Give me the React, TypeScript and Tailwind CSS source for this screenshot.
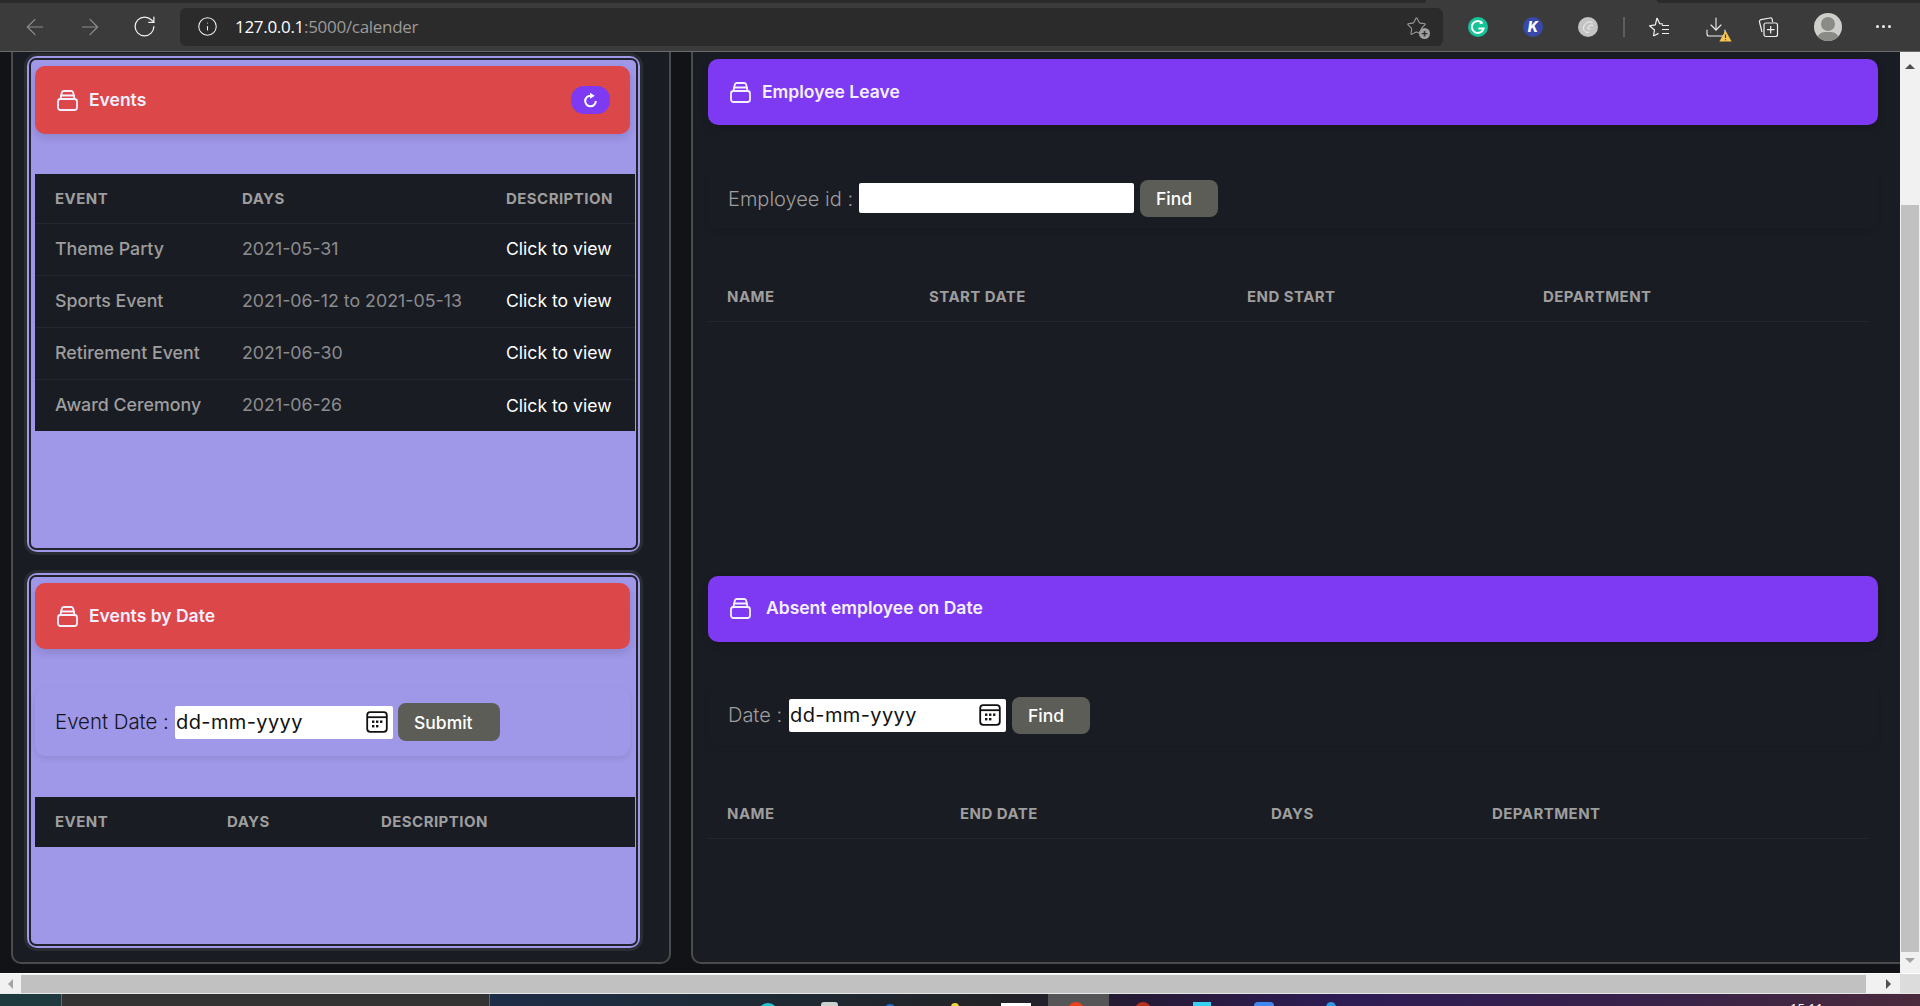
import React from "react";
import { ArrowLeft, ArrowRight, RotateCw, Info, Star, Download } from "lucide-react";

const font = "font-['Inter',sans-serif]";

function StackIcon({ className }: { className?: string }) {
  return (
    <svg viewBox="0 0 21 21" fill="none" stroke="currentColor" strokeWidth="1.8" strokeLinejoin="round" strokeLinecap="round" className={className}>
      <rect x="1" y="9" width="19" height="11" rx="2.5" />
      <path d="M3.5 9 4.8 2.8A2 2 0 0 1 6.7 1h7.6a2 2 0 0 1 1.9 1.8L17.5 9" />
      <path d="M4 5.5h13" />
    </svg>
  );
}

function CalendarIcon() {
  return (
    <svg viewBox="0 0 22 22" className="w-[22px] h-[22px] shrink-0" fill="none">
      <rect x="1.2" y="1.2" width="19.6" height="19.6" rx="3" stroke="#111" strokeWidth="1.8" />
      <path d="M1.5 6.2h19" stroke="#111" strokeWidth="1.8" />
      <g fill="#111">
        <rect x="6" y="9.5" width="2.4" height="2.4" />
        <rect x="10" y="9.5" width="2.4" height="2.4" />
        <rect x="14" y="9.5" width="2.4" height="2.4" />
        <rect x="6" y="14" width="2.4" height="2.4" />
        <rect x="10" y="14" width="2.4" height="2.4" />
      </g>
    </svg>
  );
}

function TitleBar({ title, color, gap, height, width, children }: { title: string; color: string; gap: string; height: string; width: string; children?: React.ReactNode }) {
  return (
    <div className={`${color} ${height} ${width} rounded-[10px] flex items-center pl-[22px] pr-[20px] shadow-[0_4px_8px_rgba(0,0,0,0.12)] text-[#f5f0ff]`}>
      <StackIcon className="w-[21px] h-[21px] shrink-0" />
      <span className={`${gap} text-[17.5px] font-semibold`}>{title}</span>
      {children}
    </div>
  );
}

function DateBox({ width }: { width: string }) {
  return (
    <div className={`${width} h-[33px] bg-white rounded-[2px] flex items-center justify-between pl-[1px] pr-[5px]`}>
      <span className="text-[20px] tracking-[0.4px] text-[#111] font-['Inter',sans-serif]">dd-mm-yyyy</span>
      <CalendarIcon />
    </div>
  );
}

function GreyButton({ label, width, height }: { label: string; width: string; height: string }) {
  return (
    <button className={`${width} ${height} bg-[#5c5d57] rounded-[8px] text-white text-[17.5px] font-medium text-left pl-[16px] pt-[2px]`}>
      {label}
    </button>
  );
}

const events = [
  ["Theme Party", "2021-05-31"],
  ["Sports Event", "2021-06-12 to 2021-05-13"],
  ["Retirement Event", "2021-06-30"],
  ["Award Ceremony", "2021-06-26"],
];

function Card({ h, children }: { h: string; children: React.ReactNode }) {
  return (
    <div className={`${h} w-[613px] rounded-[10px] bg-[#9f97e8] p-[2px] shadow-[0_0_0_3px_#2b2c32]`}>
      <div className="h-full rounded-[7px] border-2 border-[#23232e] pl-[4px]">{children}</div>
    </div>
  );
}

const th = "text-[15px] font-bold tracking-[0.45px] text-[#9e9e9e] uppercase text-left";

function App() {
  return (
    <div className={`${font} w-[1920px] h-[1006px] overflow-hidden flex flex-col bg-[#121317]`}>
      {/* browser toolbar */}
      <div className="h-[52px] shrink-0 bg-[#3b3b3b] border-b border-[#6a6a6a] relative flex flex-col">
        <div className="h-[3px] flex shrink-0">
          <div className="w-[1426px] bg-[#2a2a2a] rounded-br-[6px]" />
          <div className="flex-1" />
          <div className="w-[263px] bg-[#2a2a2a] rounded-bl-[6px]" />
        </div>
        <div className="flex-1 flex items-center pl-[22px] pb-[1px]">
          <ArrowLeft className="w-[26px] h-[26px] text-[#8d8d8d]" strokeWidth={1.1} />
          <ArrowRight className="w-[26px] h-[26px] text-[#8d8d8d] ml-[29px]" strokeWidth={1.1} />
          <RotateCw className="w-[25px] h-[25px] text-[#f0f0f0] ml-[29px]" strokeWidth={1.2} />
          <div className="ml-[23px] w-[1263px] h-[38px] bg-[#2b2b2b] rounded-[6px] flex items-center pl-[17px] pr-[15px]">
            <Info className="w-[21px] h-[21px] text-[#f0f0f0]" strokeWidth={1.2} />
            <span className="ml-[17px] text-[17px] font-['Open_Sans',sans-serif] tracking-[-0.3px] text-white">
              127.0.0.1<span className="text-[#9a9a9a]">:5000/calender</span>
            </span>
            <div className="ml-auto relative w-[22px] h-[22px]">
              <Star className="w-[21px] h-[21px] text-[#9b9b9b]" strokeWidth={1.2} />
              <div className="absolute right-[-2px] bottom-[-1px] w-[11px] h-[11px] rounded-full bg-[#a0a0a0] text-[#2b2b2b] text-[11px] leading-[10px] text-center font-bold">+</div>
            </div>
          </div>
          {/* extensions */}
          <div className="ml-[25px] w-[20px] h-[20px] shrink-0">
            <svg viewBox="0 0 20 20" className="w-[20px] h-[20px]">
              <circle cx="10" cy="10" r="10" fill="#15c39a" />
              <path d="M14.5 6.2A6 6 0 1 0 15.6 11.5H10.5" fill="none" stroke="#fff" strokeWidth="2" />
              <path d="M13.2 3.5l1.6 3.3-3.5.4z" fill="#fff" />
            </svg>
          </div>
          <div className="ml-[35px] w-[20px] h-[20px] rounded-full bg-[#3949ab] text-white text-[14px] font-extrabold italic leading-[20px] text-center shrink-0">K</div>
          <div className="ml-[35px] w-[20px] h-[20px] shrink-0">
            <svg viewBox="0 0 20 20" className="w-[20px] h-[20px]">
              <circle cx="10" cy="10" r="10" fill="#c4c4c4" />
              <path d="M14.5 5.5C10 3.5 5.5 7 5.5 11.5c0 3 3 4.5 5.5 3.5M15 8.5c-2-1-4.5 0-5 2.5-.2 1.3 1.5 1.7 2.3.6" fill="none" stroke="#f2f2f2" strokeWidth="1" />
            </svg>
          </div>
          <div className="ml-[25px] w-[2px] h-[20px] bg-[#5e5e5e]" />
          <div className="ml-[25px] w-[24px] h-[22px] flex items-center text-[#f0f0f0] -translate-x-[3px]">
            <svg viewBox="0 0 24 22" className="w-[24px] h-[22px]" fill="none" stroke="currentColor" strokeWidth="1.2" strokeLinejoin="round">
              <path d="M10 2l2.6 5.6 3.4.5M6.5 20l1-6-5-4.2 5.8-1L10 2M6.5 20l5-2.6" />
              <path d="M15 9.5h7M15 13.5h7M15 17.5h7" />
            </svg>
          </div>
          <div className="ml-[31px] relative w-[24px] h-[24px] -translate-x-[1px]">
            <Download className="w-[24px] h-[24px] text-[#f0f0f0]" strokeWidth={1.1} />
            <svg viewBox="0 0 12 11" className="absolute right-[-4px] bottom-[-3px] w-[13px] h-[12px]">
              <path d="M6 0.5 11.7 10.5H0.3Z" fill="#f5c451" />
              <path d="M6 4v3.4M6 8.4v1" stroke="#333" strokeWidth="1" />
            </svg>
          </div>
          <div className="ml-[30px] w-[22px] h-[22px] -translate-x-[2px]">
            <svg viewBox="0 0 22 22" className="w-[22px] h-[22px]" fill="none" stroke="#f0f0f0" strokeWidth="1.2" strokeLinejoin="round">
              <path d="M5 16 2.5 6a2 2 0 0 1 1.5-2.4L13 2a2 2 0 0 1 2.3 1.6L15.6 6" />
              <rect x="7" y="7" width="13.5" height="13.5" rx="2" />
              <path d="M13.7 10v7.5M10 13.7h7.5" />
            </svg>
          </div>
          <div className="ml-[33px] w-[28px] h-[28px] rounded-full bg-[#cfcfca] relative overflow-hidden">
            <div className="absolute left-[7px] top-[4px] w-[14px] h-[14px] rounded-full bg-[#8a8a87]" />
            <div className="absolute left-[3px] top-[19px] w-[22px] h-[16px] rounded-full bg-[#8a8a87]" />
          </div>
          <div className="ml-[34px] flex gap-[3px]">
            <div className="w-[3px] h-[3px] rounded-full bg-[#f0f0f0]" />
            <div className="w-[3px] h-[3px] rounded-full bg-[#f0f0f0]" />
            <div className="w-[3px] h-[3px] rounded-full bg-[#f0f0f0]" />
          </div>
        </div>
      </div>

      {/* page */}
      <div className="h-[921px] shrink-0 flex">
        <div className="w-[1900px] flex pl-[11px] pb-[9px] gap-[20px] overflow-hidden">
          {/* left panel */}
          <div className="w-[660px] h-full shrink-0 bg-[#1a1c23] border-x-2 border-b-2 border-[#4b4b4e] rounded-b-[10px] pl-[14px] pt-[4px] flex flex-col gap-[21px]">
            <Card h="h-[496px]">
              <div className="pt-[6px]">
                <TitleBar title="Events" color="bg-[#dc474a]" gap="ml-[11px]" height="h-[68px]" width="w-[595px]">
                  <div className="ml-auto w-[39px] h-[28px] rounded-[13px] bg-[#7e3af2] flex items-center justify-center">
                    <svg viewBox="0 0 16 16" className="w-[17px] h-[17px]" fill="none">
                      <path d="M8 3.5a5 5 0 1 0 5 5" stroke="#fff" strokeWidth="1.9" />
                      <path d="M7.6 0.6v5.8L12 3.5z" fill="#fff" />
                    </svg>
                  </div>
                </TitleBar>
                <table className="mt-[40px] w-[600px] table-fixed bg-[#1a1c23] border-collapse">
                  <thead>
                    <tr className="h-[49px] border-b border-[#24272f]">
                      <th className={`${th} w-[207px] pl-[20px] pt-[2px]`}>Event</th>
                      <th className={`${th} w-[264px] pt-[2px]`}>Days</th>
                      <th className={`${th} pt-[2px]`}>Description</th>
                    </tr>
                  </thead>
                  <tbody>
                    {events.map(([name, days], i) => (
                      <tr key={name} className={`${i < 3 ? "h-[52px] border-b border-[#24272f]" : "h-[52px]"}`}>
                        <td className="pl-[20px] pt-[1px] text-[17.8px] font-medium text-[#9e9e9e] whitespace-nowrap">{name}</td>
                        <td className="pt-[1px] text-[17.8px] text-[#8b8c8f] whitespace-nowrap">{days}</td>
                        <td className="pt-[1px] text-[17.6px] text-white whitespace-nowrap">Click to view</td>
                      </tr>
                    ))}
                  </tbody>
                </table>
              </div>
            </Card>
            <Card h="h-[375px]">
              <div className="pt-[6px]">
                <TitleBar title="Events by Date" color="bg-[#dc474a]" gap="ml-[11px]" height="h-[66px]" width="w-[595px]" />
                <div className="mt-[39px] w-[595px] h-[68px] rounded-[10px] shadow-[0_3px_6px_rgba(0,0,0,0.08)] flex items-center pl-[20px]">
                  <span className="text-[20.4px] font-light text-[#14151a] w-[120px] shrink-0 whitespace-nowrap">Event Date :</span>
                  <DateBox width="w-[218px]" />
                  <div className="ml-[5px]">
                    <GreyButton label="Submit" width="w-[102px]" height="h-[38px]" />
                  </div>
                </div>
                <table className="mt-[41px] w-[600px] table-fixed bg-[#1a1c23] border-collapse">
                  <thead>
                    <tr className="h-[50px]">
                      <th className={`${th} w-[192px] pl-[20px]`}>Event</th>
                      <th className={`${th} w-[154px]`}>Days</th>
                      <th className={th}>Description</th>
                    </tr>
                  </thead>
                </table>
              </div>
            </Card>
          </div>

          {/* right panel */}
          <div className="flex-1 h-full bg-[#1a1c23] border-l-2 border-b-2 border-[#4b4b4e] rounded-bl-[10px] pl-[15px] pt-[7px]">
            <TitleBar title="Employee Leave" color="bg-[#7e3af2]" gap="ml-[11px]" height="h-[66px]" width="w-[1170px]" />
            <div className="mt-[44px] w-[1170px] h-[59px] rounded-[10px] shadow-[0_3px_6px_rgba(0,0,0,0.08)] flex items-center pl-[20px]">
              <span className="text-[20px] font-light text-[#9e9e9e] w-[131px] shrink-0 whitespace-nowrap">Employee id :</span>
              <div className="w-[275px] h-[30px] bg-white rounded-[2px] -translate-y-[1px]" />
              <div className="ml-[6px]">
                <GreyButton label="Find" width="w-[78px]" height="h-[37px]" />
              </div>
            </div>
            <table className="mt-[33px] w-[1160px] table-fixed border-collapse">
              <thead>
                <tr className="h-[60px] border-b border-[#24272f]">
                  <th className={`${th} w-[221px] pl-[19px] pt-[12px]`}>Name</th>
                  <th className={`${th} w-[318px] pt-[12px]`}>Start Date</th>
                  <th className={`${th} w-[296px] pt-[12px]`}>End Start</th>
                  <th className={`${th} pt-[12px]`}>Department</th>
                </tr>
              </thead>
            </table>
            <div className="h-[254px]" />
            <TitleBar title="Absent employee on Date" color="bg-[#7e3af2]" gap="ml-[15px]" height="h-[66px]" width="w-[1170px]" />
            <div className="mt-[44px] w-[1170px] h-[59px] rounded-[10px] shadow-[0_3px_6px_rgba(0,0,0,0.08)] flex items-center pl-[20px]">
              <span className="text-[20px] font-light text-[#9e9e9e] w-[61px] shrink-0">Date :</span>
              <DateBox width="w-[217px]" />
              <div className="ml-[6px]">
                <GreyButton label="Find" width="w-[78px]" height="h-[37px]" />
              </div>
            </div>
            <table className="mt-[34px] w-[1160px] table-fixed border-collapse">
              <thead>
                <tr className="h-[60px] border-b border-[#24272f]">
                  <th className={`${th} w-[252px] pl-[19px] pt-[12px]`}>Name</th>
                  <th className={`${th} w-[311px] pt-[12px]`}>End Date</th>
                  <th className={`${th} w-[221px] pt-[12px]`}>Days</th>
                  <th className={`${th} pt-[12px]`}>Department</th>
                </tr>
              </thead>
            </table>
          </div>
        </div>

        {/* vertical scrollbar */}
        <div className="w-[20px] bg-[#f1f1f1] flex flex-col items-center">
          <div className="h-[17px] flex items-end">
            <div className="w-0 h-0 border-x-[5px] border-x-transparent border-b-[5px] border-b-[#505050]" />
          </div>
          <div className="mt-[136px] w-[18px] h-[747px] bg-[#c1c1c1]" />
          <div className="mt-[6px] w-0 h-0 border-x-[5px] border-x-transparent border-t-[5px] border-t-[#a3a3a3]" />
        </div>
      </div>

      {/* horizontal scrollbar */}
      <div className="h-[20px] shrink-0 bg-[#f1f1f1] border-t border-white flex items-center">
        <div className="w-[21px] flex justify-center">
          <div className="w-0 h-0 border-y-[5px] border-y-transparent border-r-[5px] border-r-[#a3a3a3]" />
        </div>
        <div className="w-[1845px] h-[18px] bg-[#c1c1c1]" />
        <div className="w-[34px] flex justify-end pr-[9px]">
          <div className="w-0 h-0 border-y-[5px] border-y-transparent border-l-[5px] border-l-[#505050]" />
        </div>
        <div className="w-[20px] h-full bg-[#dcdcdc]" />
      </div>

      {/* taskbar */}
      <div className="h-[13px] shrink-0 flex bg-[linear-gradient(90deg,#1f2d45_0%,#1e2d48_25%,#1d2b38_37%,#222326_52%,#261a38_60%,#2d1c55_70%,#3a2348_88%,#4a2a3c_100%)] overflow-hidden relative border-t border-[#e8e8e8]">
        <div className="w-[61px] bg-[#1f3a3f]" />
        <div className="w-[429px] bg-[#333333] border-x border-[#666]" />
        <div className="absolute left-[758px] top-[9px] w-[20px] h-[20px] rounded-full bg-[#22c4d6]" />
        <div className="absolute left-[821px] top-[8px] w-[17px] h-[15px] rounded-[3px] bg-[#cfcfcf]" />
        <div className="absolute left-[884px] top-[10px] w-[12px] h-[12px] rounded-full bg-[#1f6fd0]" />
        <div className="absolute left-[951px] top-[9px] w-[8px] h-[12px] rounded-t-full bg-[#f3d33c]" />
        <div className="absolute left-[1001px] top-[9px] w-[30px] h-[15px] bg-white" />
        <div className="absolute left-[1048px] top-0 w-[61px] h-[13px] bg-[#555558]" />
        <div className="absolute left-[1068px] top-[8px] w-[16px] h-[16px] rounded-full bg-[#e8431a]" />
        <div className="absolute left-[1135px] top-[8px] w-[16px] h-[16px] rounded-full bg-[#b8301c]" />
        <div className="absolute left-[1193px] top-[8px] w-[18px] h-[16px] bg-[#38d0f0]" />
        <div className="absolute left-[1254px] top-[8px] w-[20px] h-[16px] rounded-[4px] bg-[#3f86ee]" />
        <div className="absolute left-[1326px] top-[8px] w-[10px] h-[16px] rounded-t-full bg-[#2b9ae0]" />
        <div className="absolute left-[1790px] top-[6px] text-[13px] leading-[16px] text-white font-['Open_Sans',sans-serif]">15:11</div>
      </div>
    </div>
  );
}

export default App;
